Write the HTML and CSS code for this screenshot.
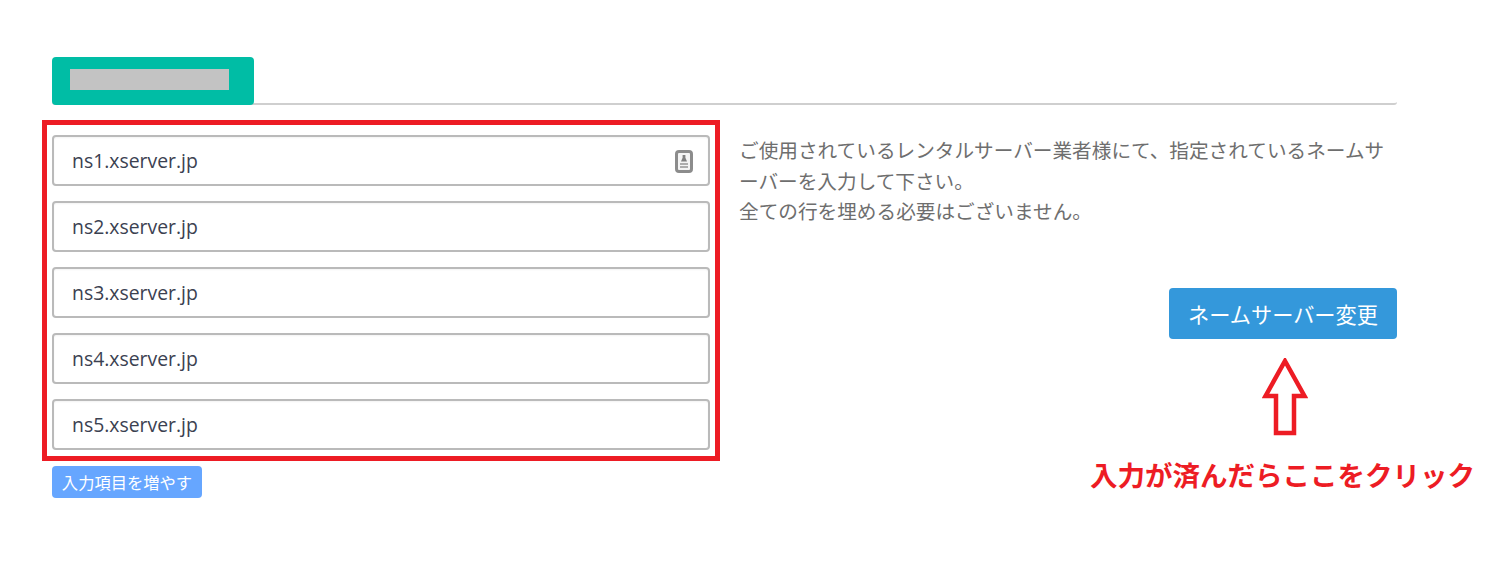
FILE: index.html
```html
<!DOCTYPE html>
<html lang="ja">
<head>
<meta charset="utf-8">
<title>ネームサーバー変更</title>
<link rel="stylesheet" href="styles.css">
</head>
<body>
<main class="panel">
  <div class="tab-row">
    <div class="tab"><span class="redacted"></span></div>
  </div>
  <div class="content">
    <div class="fields">
      <div class="field">
        <span>ns1.xserver.jp</span>
        <svg class="key-icon" width="18" height="23" viewBox="0 0 18 23" aria-hidden="true">
          <rect x="1.5" y="1.5" width="15" height="20" rx="2.5" fill="#f4f4f4" stroke="#8c8c8c" stroke-width="3"/>
          <rect x="7.6" y="5" width="2.8" height="3" fill="#808080"/>
          <path d="M6 11.5 L7.5 8 H10.5 L12 11.5 Z" fill="#808080"/>
          <rect x="5" y="13" width="8" height="2" fill="#adadad"/>
          <rect x="5" y="16" width="8" height="2" fill="#adadad"/>
        </svg>
      </div>
      <div class="field"><span>ns2.xserver.jp</span></div>
      <div class="field"><span>ns3.xserver.jp</span></div>
      <div class="field"><span>ns4.xserver.jp</span></div>
      <div class="field"><span>ns5.xserver.jp</span></div>
      <button class="add-btn" type="button">入力項目を増やす</button>
    </div>
    <div class="side">
      <p class="help">ご使用されているレンタルサーバー業者様にて、指定されているネームサーバーを入力して下さい。<br>全ての行を埋める必要はございません。</p>
      <button class="submit-btn" type="button">ネームサーバー変更</button>
    </div>
  </div>
</main>
<div class="mark-box"></div>
<svg class="mark-arrow" width="46" height="78" viewBox="0 0 46 78" aria-hidden="true">
  <path d="M23 3 L42.5 38 H32 V75 H14 V38 H3.5 Z" fill="#fff" stroke="#ed1c24" stroke-width="4.5" stroke-linejoin="miter"/>
</svg>
<div class="mark-text">入力が済んだらここをクリック</div>
</body>
</html>
```
FILE: styles.css
```css
* { box-sizing: border-box; }
html, body { margin: 0; padding: 0; background: #fff; }
body {
  position: relative;
  width: 1488px;
  height: 579px;
  overflow: hidden;
  font-family: "Open Sans", "Noto Sans CJK JP", sans-serif;
}
.panel {
  width: 1397px;
  padding: 57px 0 0 52px;
}
.tab-row {
  border-bottom: 2px solid #cfcfcf;
  height: 48px;
  margin-bottom: 30px;
  border-radius: 0 0 3px 3px;
}
.tab {
  width: 202px;
  height: 48px;
  background: #00bda5;
  border-radius: 4px;
  padding: 12px 18px;
}
.redacted {
  display: block;
  width: 159px;
  height: 21px;
  background: #c3c3c3;
}
.content {
  display: flex;
  gap: 29px;
}
.fields {
  width: 658px;
  flex: none;
  display: flex;
  flex-direction: column;
  align-items: flex-start;
  gap: 15px;
}
.field {
  width: 100%;
  height: 51px;
  border: 2px solid #bababa;
  border-radius: 4px;
  padding: 0 15px 0 18px;
  display: flex;
  align-items: center;
  justify-content: space-between;
  font-size: 19.4px;
  color: #3b4151;
  box-shadow: inset 0 1px 2px rgba(0,0,0,.05);
}
.key-icon { flex: none; margin-top: 2px; }
.add-btn {
  margin-top: 1px;
  width: 150px;
  height: 32px;
  border: 0;
  border-radius: 4px;
  background: #66a6ff;
  color: #fff;
  font: 16.3px/32px "Noto Sans CJK JP", sans-serif;
  padding: 0;
}
.side {
  flex: 1;
  display: flex;
  flex-direction: column;
  align-items: flex-end;
}
.help {
  margin: 0;
  width: 100%;
  font: 400 19.65px/30.5px "Noto Sans CJK JP", sans-serif;
  color: #6e6e6e;
}
.submit-btn {
  margin-top: 61px;
  width: 228px;
  height: 51px;
  border: 0;
  border-radius: 4px;
  background: #3498db;
  color: #fff;
  font: 400 21.2px/51px "Noto Sans CJK JP", sans-serif;
  padding: 0;
}
.mark-box {
  position: absolute;
  left: 42px;
  top: 120px;
  width: 678px;
  height: 341px;
  border: 5px solid #ed1c24;
}
.mark-arrow {
  position: absolute;
  left: 1262px;
  top: 358px;
}
.mark-text {
  position: absolute;
  left: 1090px;
  top: 455px;
  font: 700 27.5px/38px "Noto Sans CJK JP", serif;
  color: #ed1c24;
  white-space: nowrap;
}
```
